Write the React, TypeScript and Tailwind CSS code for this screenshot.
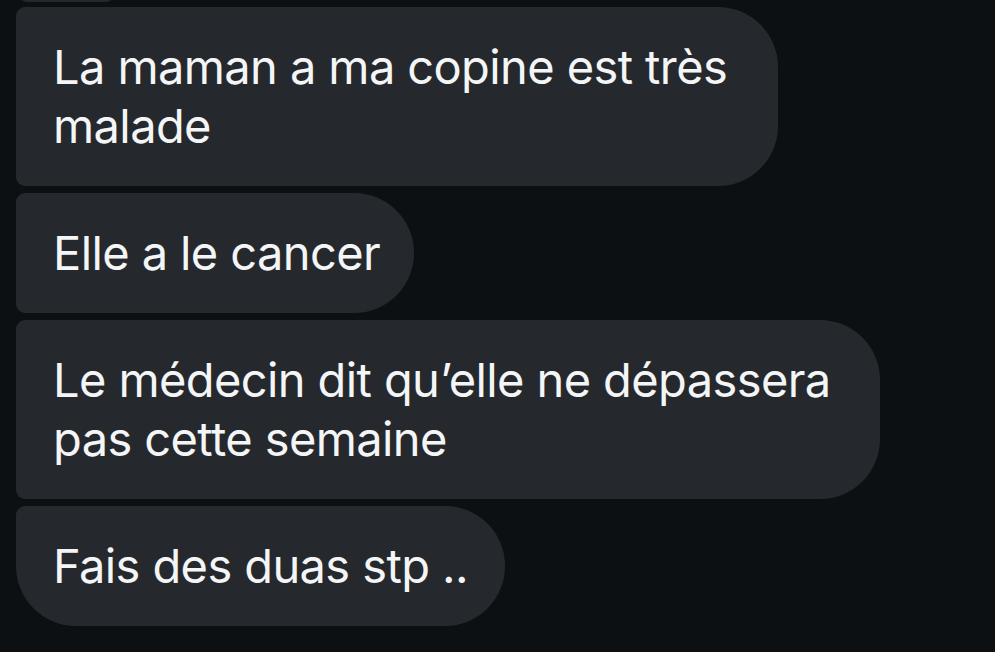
const MESSAGES = [
  { lines: ["La maman a ma copine est très", "malade"], width: "w-[762px]", corner: "rounded-[60px] rounded-l-[9px]" },
  { lines: ["Elle a le cancer"], width: "w-[398px]", corner: "rounded-[60px] rounded-l-[9px]" },
  { lines: ["Le médecin dit qu’elle ne dépassera", "pas cette semaine"], width: "w-[864px]", corner: "rounded-[60px] rounded-l-[9px]" },
  { lines: ["Fais des duas stp .."], width: "w-[489px]", corner: "rounded-[60px] rounded-tl-[9px]" },
];

export default function App() {
  return (
    <div
      className="w-[995px] h-[652px] overflow-hidden bg-[#0c1013] pl-[16px] flex flex-col gap-[7px]"
      style={{ fontFamily: "Inter, 'Noto Sans', sans-serif" }}
    >
      {/* tail end of the previous bubble, scrolled off the top */}
      <div className="w-[101px] h-[60px] -mt-[58px] -mb-[2px] rounded-b-[12px] bg-[#25292d] shrink-0" />

      {MESSAGES.map((m) => (
        <div
          key={m.lines[0]}
          className={`${m.width} ${m.corner} shrink-0 bg-[#25292d] pl-[37px] pt-[30px] pb-[31px]`}
        >
          {m.lines.map((line) => (
            <p key={line} className="whitespace-nowrap text-[#f4f5f6] text-[47px] leading-[59px] tracking-[-0.6px]">
              {line}
            </p>
          ))}
        </div>
      ))}
    </div>
  );
}
